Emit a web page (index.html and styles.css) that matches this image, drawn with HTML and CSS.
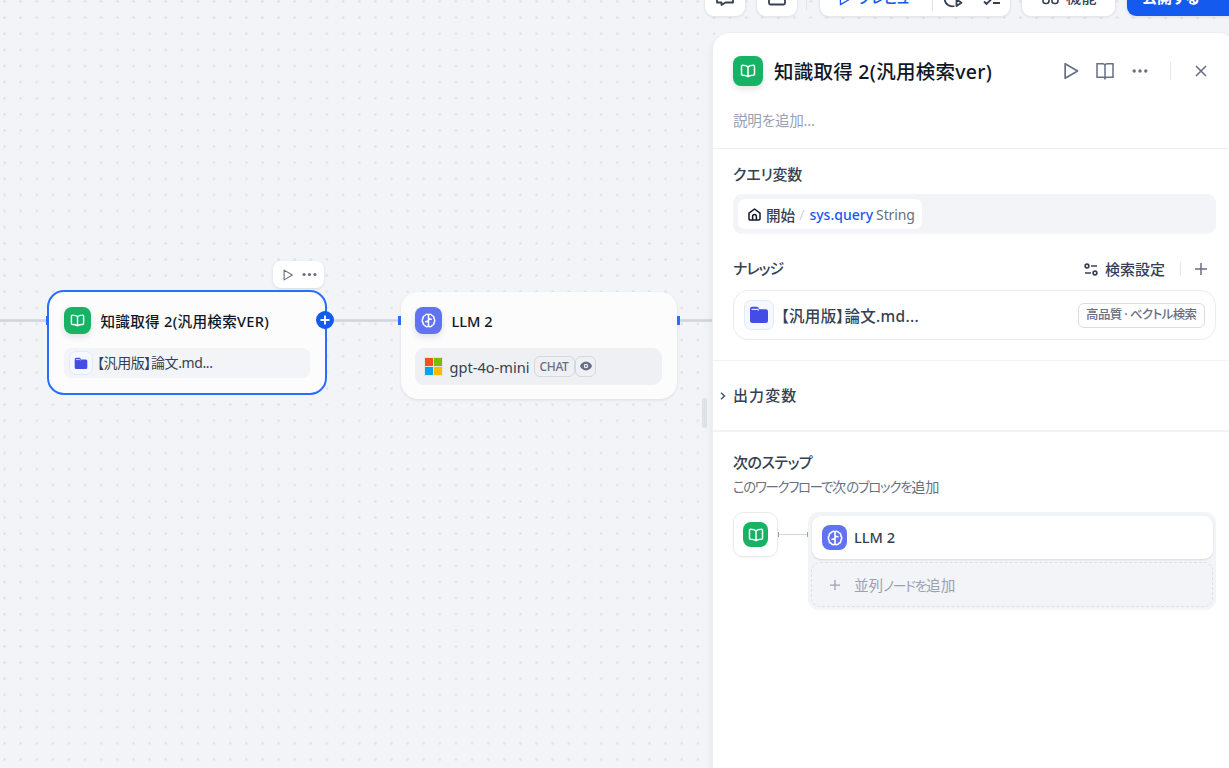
FILE: index.html
```html
<!DOCTYPE html>
<html lang="ja">
<head>
    <meta charset="UTF-8">
    <meta name="viewport" content="width=device-width, initial-scale=1.0">
    <title>ワークフロー</title>
    <link rel="stylesheet" href="styles.css">
</head>
<body>
    <!-- Shared icons -->
    <svg class="sprite" viewBox="0 0 24 24">
        <symbol id="i-book" viewBox="0 0 16 16">
            <path d="M8 3.800C6.500 2.600 4.500 2.300 2.600 2.300c-.7 0-1.100.4-1.100 1v8c0 .6.4 1 1.100 1 2 0 4 .3 5.400 1.400 1.400-1.100 3.400-1.400 5.400-1.400.7 0 1.100-.4 1.100-1v-8c0-.6-.4-1-1.100-1-1.900 0-3.900.3-5.400 1.500zv9.900" fill="none" stroke="currentColor" stroke-width="1.500" stroke-linejoin="round"/>
        </symbol>
        <symbol id="i-brain" viewBox="0 0 16 16">
            <path d="M8 1.600v12.800M8 1.900C6.400.9 4.600 1.400 4.200 2.800 2.600 3 1.900 4.400 2.300 5.600 1 6.600 1 9.400 2.300 10.400c-.4 1.300.4 2.600 1.900 2.800.4 1.400 2.200 1.900 3.800.9M8 1.900c1.600-1 3.400-.5 3.800.9 1.600.2 2.300 1.600 1.900 2.800 1.300 1 1.300 3.800 0 4.800.4 1.300-.4 2.600-1.900 2.800-.4 1.400-2.200 1.900-3.800.9M5 9.300C6.500 9.300 8 8.600 8 7.300M11 6.700C9.500 6.700 8 6 8 4.700" fill="none" stroke="currentColor" stroke-width="1.600" stroke-linecap="round" stroke-linejoin="round"/>
        </symbol>
        <symbol id="i-folder" viewBox="0 0 20 18">
            <path d="M1 3a2.300 2.300 0 0 1 2.300-2.300h4.200c.8 0 1.500.4 1.900 1.100l.8 1.400h6.500A2.300 2.300 0 0 1 19 5.500v9.200a2.300 2.300 0 0 1-2.300 2.300H3.300A2.300 2.300 0 0 1 1 14.700z" fill="#444ce7"/>
            <path d="M2.600 3.400h5.600c.7 0 1.100.4 1.400 1" fill="none" stroke="#e6eaff" stroke-width="1.200"/>
        </symbol>
        <symbol id="i-play" viewBox="0 0 16 16">
            <path d="M2.800 1.500v13L13.800 8z" fill="none" stroke="currentColor" stroke-width="1.500" stroke-linejoin="round"/>
        </symbol>
        <symbol id="i-dots" viewBox="0 0 16 16">
            <circle cx="2.200" cy="8" r="1.700" fill="currentColor"/>
            <circle cx="8" cy="8" r="1.700" fill="currentColor"/>
            <circle cx="13.800" cy="8" r="1.700" fill="currentColor"/>
        </symbol>
        <symbol id="i-plus" viewBox="0 0 12 12">
            <path d="M6 0v12M0 6h12" fill="none" stroke="currentColor" stroke-width="1.500"/>
        </symbol>
    </svg>

    <div class="canvas">
        <div class="edge edge-in"></div>
        <div class="edge edge-mid"></div>
        <div class="edge edge-out"></div>

        <div class="node-actions">
            <svg width="12" height="12"><use href="#i-play"/></svg>
            <svg width="15" height="15"><use href="#i-dots"/></svg>
        </div>

        <div class="node node-knowledge">
            <div class="node-head">
                <span class="block-icon green"><svg width="15" height="15"><use href="#i-book"/></svg></span>
                <span class="node-title wide">知識取得 2(汎用検索VER)</span>
            </div>
            <div class="dataset-row">
                <span class="folder-icon small"><svg width="14" height="13"><use href="#i-folder"/></svg></span>
                <span class="dataset-name">【汎用版】論文.md...</span>
            </div>
            <span class="handle handle-left"></span>
            <span class="add-next"><svg width="10" height="10" viewBox="0 0 10 10"><path d="M5 .5v9M.5 5h9" stroke="#fff" stroke-width="1.800"/></svg></span>
        </div>

        <div class="node node-llm">
            <div class="node-head">
                <span class="block-icon indigo"><svg width="15" height="15"><use href="#i-brain"/></svg></span>
                <span class="node-title">LLM 2</span>
            </div>
            <div class="model-row">
                <span class="ms-logo"><i></i><i></i><i></i><i></i></span>
                <span class="model-name">gpt-4o-mini</span>
                <span class="tag">CHAT</span>
                <span class="tag tag-eye">
                    <svg width="12" height="10" viewBox="0 0 12 10"><path d="M6 .5C3 .5.8 2.700 0 5c.8 2.300 3 4.500 6 4.500S11.200 7.300 12 5C11.200 2.700 9 .5 6 .5z" fill="#676f83"/><circle cx="6" cy="5" r="2.200" fill="#f2f4f7"/><circle cx="6" cy="5" r="1" fill="#676f83"/></svg>
                </span>
            </div>
            <span class="handle handle-left"></span>
            <span class="handle handle-right"></span>
        </div>
    </div>

    <div class="toolbar">
        <span class="tool-btn tool-icon">
            <svg width="18" height="16" viewBox="0 0 18 16" fill="none" stroke="#354052" stroke-width="1.800" stroke-linejoin="round"><path d="M1 1h16v10.500h-7.500L5.500 14v-2.500H1z"/></svg>
        </span>
        <span class="tool-btn tool-icon">
            <svg width="18" height="16" viewBox="0 0 18 16" fill="none" stroke="#354052" stroke-width="1.800"><path d="M1 8v4a1.500 1.500 0 0 0 1.500 1.500h13A1.500 1.500 0 0 0 17 12V8z"/></svg>
        </span>
        <span class="tool-line"></span>
        <span class="tool-btn run-group">
            <svg class="run-play" width="14" height="14"><use href="#i-play"/></svg>
            <span class="run-label">プレビュー</span>
            <span class="tool-line inner"></span>
            <svg class="run-history" width="20" height="18" viewBox="0 0 20 18" fill="none" stroke="#354052" stroke-width="1.800"><path d="M9.500 1.500a7.500 7.500 0 1 0 1 14.500"/><path d="M12.500 9.500v6.500l5-3.200z" stroke-linejoin="round"/></svg>
            <svg width="18" height="18" viewBox="0 0 18 18" fill="none" stroke="#354052" stroke-width="1.800"><path d="M1 11.500l2.500 2.500L8 9.500M10 13h7M10 5h7"/></svg>
        </span>
        <span class="tool-btn feature-btn">
            <svg width="17" height="17" viewBox="0 0 17 17" fill="none" stroke="#354052" stroke-width="1.600"><circle cx="4" cy="4" r="3"/><circle cx="13" cy="4" r="3"/><rect x="1" y="9.500" width="6" height="6" rx="2.500"/><rect x="10" y="9.500" width="6" height="6" rx="2.500"/></svg>
            <span>機能</span>
        </span>
        <span class="tool-btn publish-btn"><span>公開する</span></span>
    </div>

    <div class="resize-bar"></div>

    <aside class="panel">
        <header class="panel-head">
            <div class="panel-title-row">
                <span class="block-icon green large"><svg width="16" height="16"><use href="#i-book"/></svg></span>
                <h1>知識取得 2(汎用検索ver)</h1>
                <div class="panel-tools">
                    <svg width="18" height="18"><use href="#i-play"/></svg>
                    <svg width="18" height="18" viewBox="0 0 18 18" fill="none" stroke="currentColor" stroke-width="1.500"><path d="M9 3.200C8.600 2.200 8 1.700 7 1.700H1v13.600h6c1 0 1.600.3 2 1 .4-.7 1-1 2-1h6V1.700h-6c-1 0-1.600.5-2 1.500zv14.300"/></svg>
                    <svg width="16" height="16"><use href="#i-dots"/></svg>
                    <span class="v-line"></span>
                    <svg width="12" height="12" viewBox="0 0 12 12" fill="none" stroke="currentColor" stroke-width="1.600"><path d="M1 1l10 10M11 1L1 11"/></svg>
                </div>
            </div>
            <p class="description">説明を追加...</p>
        </header>

        <section class="inputs">
            <h2 class="query-label">クエリ変数</h2>
            <div class="var-field">
                <div class="var-chip">
                    <svg width="13" height="13" viewBox="0 0 13 13" fill="none" stroke="#101828" stroke-width="1.500" stroke-linejoin="round"><path d="M1 5.200L6.500 1 12 5.200v5.600c0 .7-.5 1.200-1.200 1.200H2.200C1.500 12 1 11.500 1 10.800z"/><path d="M4.600 12V8.500a1.900 1.900 0 0 1 3.800 0V12"/></svg>
                    <span class="var-node">開始</span>
                    <span class="slash">/</span>
                    <span class="var-name">sys.query</span>
                    <span class="var-type">String</span>
                </div>
            </div>
            <div class="section-row">
                <h2 class="knowledge-label">ナレッジ</h2>
                <div class="retrieval">
                    <svg width="14" height="13" viewBox="0 0 14 13" fill="none" stroke="#354052" stroke-width="1.600"><circle cx="3" cy="3" r="1.900"/><path d="M7 3h6M1 10h6"/><circle cx="11" cy="10" r="1.900"/></svg>
                    <span class="retrieval-label">検索設定</span>
                    <span class="v-line short"></span>
                    <svg class="plus" width="12" height="12"><use href="#i-plus"/></svg>
                </div>
            </div>
            <div class="dataset-card">
                <span class="folder-icon"><svg width="20" height="18"><use href="#i-folder"/></svg></span>
                <span class="card-name">【汎用版】論文.md...</span>
                <span class="quality">高品質 · ベクトル検索</span>
            </div>
        </section>

        <section class="outputs">
            <svg width="6" height="8" viewBox="0 0 6 8" fill="none" stroke="#495464" stroke-width="1.500"><path d="M1 .8L4.500 4 1 7.200"/></svg>
            <h2>出力変数</h2>
        </section>

        <section class="next-step">
            <h2 class="next-label">次のステップ</h2>
            <p class="hint"><span class="kana">このワークフローで</span>次<span class="kana">のブロックを</span>追加</p>
            <div class="next-flow">
                <div class="from-box"><span class="block-icon green mini"><svg width="16" height="16"><use href="#i-book"/></svg></span></div>
                <div class="connector"></div>
                <div class="next-list">
                    <div class="next-item">
                        <span class="block-icon indigo mini"><svg width="16" height="16"><use href="#i-brain"/></svg></span>
                        <span>LLM 2</span>
                    </div>
                    <div class="next-add">
                        <svg width="10" height="10"><use href="#i-plus"/></svg>
                        <span>並列<span class="kana">ノードを</span>追加</span>
                    </div>
                </div>
            </div>
        </section>
    </aside>
</body>
</html>
```
FILE: styles.css
```css
:root {
    --blue: #155aef;
    --green: #16b364;
    --indigo: #6172f3;
    --title: #101828;
    --text: #354052;
    --muted: #676f83;
    --light: #98a2b2;
}

* {
    margin: 0;
    padding: 0;
    box-sizing: border-box;
}

body {
    position: relative;
    width: 1229px;
    height: 768px;
    overflow: hidden;
    background: #f2f4f7;
    color: var(--text);
    font-family: "Noto Sans", "Noto Sans CJK JP", sans-serif;
    font-size: 15px;
    font-feature-settings: "palt";
    white-space: nowrap;
}

svg {
    display: block;
    flex-shrink: 0;
}

.sprite {
    position: absolute;
    width: 0;
    height: 0;
}

/* kana set tighter than kanji */
.kana {
    font-size: 0.945em;
    letter-spacing: -1.3px;
}

/* canvas */
.canvas {
    position: absolute;
    inset: 0;
    background-color: #f2f4f8;
    background-image: radial-gradient(circle, #e0e2e8 0.9px, transparent 1.6px);
    background-size: 16.13px 16.13px;
    background-position: -3.6px -6.6px;
}

.edge {
    position: absolute;
    top: 319px;
    height: 3px;
    background: linear-gradient(#dcdfe5, #d0d5dc, #dcdfe5);
}

.edge-in { left: 0; width: 48px; }
.edge-mid { left: 327px; width: 72px; }
.edge-out { left: 678px; width: 40px; }

.node {
    position: absolute;
    background: #fcfcfd;
    border-radius: 17px;
}

.node-knowledge {
    left: 47px;
    top: 290px;
    width: 280px;
    height: 105px;
    padding: 15px 15px;
    border: 2px solid #296dff;
}

.node-llm {
    left: 400.5px;
    top: 292px;
    width: 276px;
    height: 107px;
    padding: 15px 14px;
    box-shadow: 0 1px 3px rgba(16, 24, 40, 0.1);
}

.node-head {
    display: flex;
    align-items: center;
    gap: 10px;
    height: 27px;
}

.node-title {
    color: var(--title);
    font-size: 14.6px;
    font-weight: 500;
}

.node-title.wide {
    margin-left: -0.5px;
    letter-spacing: 0.28px;
}

.block-icon {
    display: flex;
    align-items: center;
    justify-content: center;
    flex-shrink: 0;
    width: 27px;
    height: 27px;
    border-radius: 8px;
    color: #fff;
    box-shadow: 0 3px 6px rgba(16, 24, 40, 0.12);
}

.block-icon.green { background: var(--green); }
.block-icon.indigo { background: var(--indigo); }

.block-icon.large {
    width: 30px;
    height: 30px;
}

.block-icon.mini {
    width: 25px;
    height: 25px;
    box-shadow: none;
}

.dataset-row {
    display: flex;
    align-items: center;
    gap: 5px;
    height: 30px;
    margin-top: 14px;
    padding: 0 5px;
    border-radius: 7px;
    background: #f2f4f7;
    font-size: 14px;
}

.dataset-name {
    margin: -2px 0 0 -1px;
    letter-spacing: -0.4px;
}

.folder-icon {
    display: flex;
    align-items: center;
    justify-content: center;
    width: 30px;
    height: 30px;
    border: 1px solid #e0eaff;
    border-radius: 7px;
    background: #f5f8ff;
}

.folder-icon.small {
    width: 24px;
    height: 24px;
}

.handle {
    position: absolute;
    top: 24px;
    width: 3px;
    height: 9px;
    background: #296dff;
}

.handle-left { left: -3px; }
.handle-right { right: -3px; }

.add-next {
    position: absolute;
    top: 19px;
    right: -9px;
    display: flex;
    align-items: center;
    justify-content: center;
    width: 18px;
    height: 18px;
    border-radius: 50%;
    background: var(--blue);
}

.node-actions {
    position: absolute;
    left: 272.500px;
    top: 261px;
    display: flex;
    align-items: center;
    gap: 8px;
    width: 51.500px;
    height: 27px;
    padding-left: 9px;
    border-radius: 8px;
    background: #fff;
    color: var(--muted);
    box-shadow: 0 1px 3px rgba(16, 24, 40, 0.12);
}

.model-row {
    display: flex;
    align-items: center;
    width: 247px;
    height: 37px;
    margin-top: 14px;
    padding-left: 9px;
    border-radius: 9px;
    background: #eff0f4;
}

.ms-logo {
    display: grid;
    grid-template-columns: 8px 8px;
    gap: 1px;
    width: 19px;
    height: 19px;
    padding: 1px;
    background: #e3e5e4;
}

.ms-logo i { height: 8px; background: #f25022; }
.ms-logo i:nth-child(2) { background: #7fba00; }
.ms-logo i:nth-child(3) { background: #00a4ef; }
.ms-logo i:nth-child(4) { background: #ffb900; }

.model-name {
    margin: 0 4px 0 7px;
    font-size: 14.6px;
}

.tag {
    width: 41px;
    height: 21px;
    margin-top: -1px;
    padding: 0 5px;
    border: 1px solid #d5d8df;
    border-radius: 6px;
    color: var(--muted);
    font-size: 12px;
    font-weight: 500;
    letter-spacing: -0.35px;
    line-height: 19px;
}

.tag-eye {
    display: flex;
    align-items: center;
    width: 21px;
    padding: 0 4px;
}

/* toolbar */
.toolbar {
    position: absolute;
    left: 705px;
    top: -20px;
    display: flex;
    align-items: center;
    width: 560px;
    height: 36px;
}

.tool-btn {
    display: flex;
    align-items: center;
    flex-shrink: 0;
    height: 36px;
    border-radius: 9px;
    background: #fff;
    box-shadow: 0 0 0 1px #e6e8ec, 0 1px 3px rgba(16, 24, 40, 0.12);
    font-weight: 500;
}

.tool-icon {
    justify-content: center;
    width: 40px;
    margin-right: 12px;
    padding-top: 2px;
}

.tool-line {
    width: 1px;
    height: 16px;
    margin: 8px 13px 0 -3px;
    background: #dfe2e8;
}

.run-group {
    width: 190px;
    margin-right: 12px;
    padding-left: 18px;
}

.run-play, .run-label { color: var(--blue); }
.run-play { margin-top: 2px; }

.run-label {
    width: 60px;
    margin: -3px 0 0 6px;
    letter-spacing: -0.7px;
}

.tool-line.inner { margin: 0 11px 0 14px; height: 26px; }
.run-history { margin-right: 19px; margin-top: 2px; }
.run-history + svg { margin-top: 1px; }

.feature-btn {
    gap: 7px;
    width: 93px;
    margin-right: 12px;
    padding: 0 0 3px 20px;
    letter-spacing: 0.5px;
}

.publish-btn {
    width: 130px;
    padding: 0 0 3px 15px;
    background: var(--blue);
    color: #fff;
    font-weight: 600;
}

.resize-bar {
    position: absolute;
    left: 702px;
    top: 398px;
    width: 5px;
    height: 30px;
    border-radius: 3px;
    background: #dfe2e6;
}

/* side panel */
.panel {
    position: absolute;
    left: 713px;
    top: 33px;
    width: 523px;
    height: 760px;
    border-radius: 17px 17px 0 0;
    background: #fff;
    box-shadow: 0 0 0 1px #eceef1, -2px 6px 10px rgba(16, 24, 40, 0.06);
}

.panel-head {
    height: 116px;
    padding: 23px 20px 0;
    border-bottom: 1px solid #eceef1;
}

.panel-title-row {
    display: flex;
    align-items: center;
    height: 30px;
}

.panel h1 {
    margin: -2px 0 0 11px;
    color: var(--title);
    font-size: 19.5px;
    font-weight: 500;
    letter-spacing: 0.26px;
}

.panel-tools {
    display: flex;
    align-items: center;
    margin-left: auto;
    margin-right: 9px;
    color: var(--muted);
}

.panel-tools svg:nth-child(1) { margin-right: 16px; }
.panel-tools svg:nth-child(2) { margin-right: 18px; }

.v-line {
    width: 1px;
    height: 18px;
    margin: 0 24px 0 22px;
    background: #e3e6ea;
}

.description {
    margin-top: 24px;
    color: var(--light);
    font-size: 14.6px;
    letter-spacing: -0.25px;
    line-height: 20px;
}

.panel h2 {
    font-size: 15px;
    font-weight: 500;
    line-height: 22px;
}

.panel .query-label { letter-spacing: -0.2px; }
.panel .knowledge-label { margin-top: -2px; letter-spacing: -1px; }
.panel .next-label { margin-top: -1px; letter-spacing: -0.5px; }
.outputs h2 { margin-top: -1px; letter-spacing: 1.1px; }

.inputs {
    height: 212px;
    padding: 14px 20px 0;
    border-bottom: 1px solid #f1f2f4;
}

.var-field {
    width: 483px;
    height: 40px;
    margin-top: 9px;
    padding: 5px;
    border-radius: 9px;
    background: #f2f4f7;
}

.var-chip {
    display: flex;
    align-items: center;
    width: 184px;
    height: 30px;
    padding-left: 10px;
    border-radius: 7px;
    background: #fff;
    font-size: 14px;
}

.var-node { margin-left: 5px; font-size: 14.6px; font-weight: 500; }
.slash { margin: 0 5px 0 4px; color: #d0d5dc; }
.var-name { margin-top: 1px; color: var(--blue); font-weight: 500; }
.var-type { margin: 1px 0 0 3px; color: var(--muted); letter-spacing: -0.1px; }

.section-row {
    display: flex;
    align-items: center;
    justify-content: space-between;
    height: 22px;
    margin-top: 24px;
}

.retrieval {
    display: flex;
    align-items: center;
    height: 22px;
    margin-right: 9px;
    font-weight: 500;
}

.retrieval-label { margin: -2px 0 0 7px; }
.v-line.short { height: 14px; margin: 0 14px 0 15px; }
.plus { color: var(--muted); }

.dataset-card {
    display: flex;
    align-items: center;
    height: 50px;
    margin-top: 10px;
    padding: 0 10px;
    border: 1px solid #e9ebee;
    border-radius: 15px;
}

.card-name {
    margin-left: 7px;
    font-size: 15.5px;
    font-weight: 500;
    letter-spacing: 0.3px;
}

.quality {
    width: 127px;
    height: 25px;
    margin-left: auto;
    padding: 0 7px;
    border: 1px solid #d9dce2;
    border-radius: 6px;
    color: var(--muted);
    font-size: 12.5px;
    font-weight: 500;
    letter-spacing: -0.6px;
    line-height: 22px;
}

.outputs {
    display: flex;
    align-items: center;
    gap: 7px;
    height: 71px;
    padding-left: 7px;
    border-bottom: 2px solid #f2f3f5;
}

.next-step {
    padding: 20px 20px 0;
}

.hint {
    height: 20px;
    margin-top: 4px;
    color: var(--muted);
    font-size: 14.2px;
    line-height: 20px;
}

.next-flow {
    display: flex;
    margin-top: 15px;
}

.from-box {
    display: flex;
    align-items: center;
    justify-content: center;
    width: 45px;
    height: 45px;
    border: 1px solid #e9ebef;
    border-radius: 10px;
    box-shadow: 0 1px 2px rgba(16, 24, 40, 0.05);
}

.connector {
    width: 30px;
    height: 5px;
    margin-top: 20px;
    border: solid #98a2b2;
    border-width: 0 1px;
    background: linear-gradient(#d0d5dc, #d0d5dc) center / 100% 1px no-repeat;
}

.next-list {
    width: 408px;
    height: 98px;
    padding: 4px 3px 3px;
    border-radius: 11px;
    background: #f2f4f7;
}

.next-item {
    display: flex;
    align-items: center;
    gap: 7px;
    height: 43px;
    margin-left: 1px;
    padding-left: 10px;
    border-radius: 9px;
    background: #fff;
    box-shadow: 0 1px 2px rgba(16, 24, 40, 0.12);
    font-size: 14.6px;
    font-weight: 500;
}

.next-item span:last-child { margin-top: -2px; }

.next-add {
    display: flex;
    align-items: center;
    gap: 14px;
    height: 45px;
    margin-top: 3px;
    padding-left: 18px;
    border: 1px dashed #dde1e7;
    border-radius: 9px;
    color: var(--light);
    font-size: 14.6px;
}
```
